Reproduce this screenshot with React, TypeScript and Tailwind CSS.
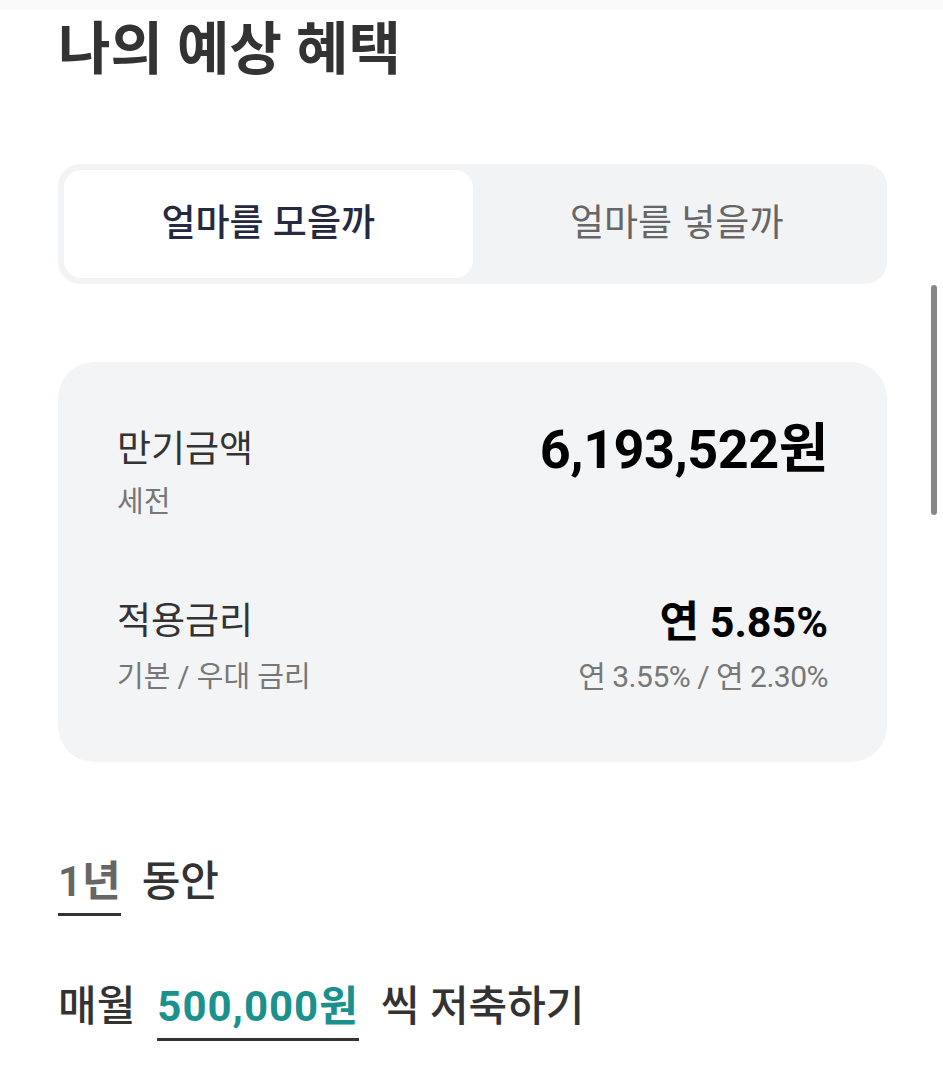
import { useState } from "react";

const font = "font-['Roboto','Noto_Sans_CJK_KR',sans-serif]";

export default function App() {
  const [tab, setTab] = useState(0);
  const tabs = ["얼마를 모을까", "얼마를 넣을까"];

  return (
    <div className={`relative min-h-[1088px] w-[943px] bg-white ${font}`}>
      <div className="h-[10px] bg-[#fafafa]" />

      <div className="pl-[58px] pr-[56px]">
        <h1 className="mt-[8px] text-[57px] font-bold leading-[64px] text-[#333]">
          나의 예상 혜택
        </h1>

        <div className="mt-[82px] flex h-[120px] rounded-[22px] bg-[#f2f3f5] p-[6px]">
          {tabs.map((t, i) => (
            <button
              key={t}
              type="button"
              onClick={() => setTab(i)}
              className={`flex flex-1 items-center justify-center rounded-[18px] text-[37px] ${
                tab === i
                  ? "bg-white font-medium text-[#262a40]"
                  : "font-normal text-[#666]"
              }`}
            >
              {t}
            </button>
          ))}
        </div>

        <div className="mt-[78px] rounded-[36px] bg-[#f3f4f6] px-[59px] pb-[65px] pt-[64px]">
          <div className="flex items-start justify-between">
            <div>
              <div className="text-[37px] leading-[48px] text-[#333]">만기금액</div>
              <div className="mt-[8px] text-[29px] leading-[40px] text-[#777]">세전</div>
            </div>
            <div className="text-[54px] font-bold leading-[48px] tracking-[-0.5px] text-black">
              6,193,522원
            </div>
          </div>

          <div className="mt-[76px] flex items-start justify-between">
            <div>
              <div className="text-[37px] leading-[48px] text-[#333]">적용금리</div>
              <div className="mt-[11px] text-[29px] leading-[40px] text-[#777]">
                기본 / 우대 금리
              </div>
            </div>
            <div className="flex flex-col items-end">
              <div className="text-[43px] font-bold leading-[48px] text-black">
                연 5.85%
              </div>
              <div className="mt-[11px] text-[30px] leading-[40px] tracking-[-0.5px] text-[#777]">
                연 3.55% / 연 2.30%
              </div>
            </div>
          </div>
        </div>

        <div className="mt-[92px] flex items-start gap-[21px] text-[42px] leading-[56px]">
          <span className="border-b-[3px] border-[#333] pb-[3px] font-semibold text-[#666]">
            1년
          </span>
          <span className="font-medium text-[#333]">동안</span>
        </div>

        <div className="mt-[63px] flex items-start gap-[22px] text-[42px] leading-[56px]">
          <span className="font-medium text-[#333]">매월</span>
          <span className="border-b-[3px] border-[#333] pb-[3px] font-bold tracking-[1px] text-[#1a918c]">
            500,000원
          </span>
          <span className="font-medium text-[#333]">씩 저축하기</span>
        </div>
      </div>

      <div className="absolute left-[931px] top-[285px] h-[230px] w-[6px] rounded-full bg-[#888]" />
    </div>
  );
}
